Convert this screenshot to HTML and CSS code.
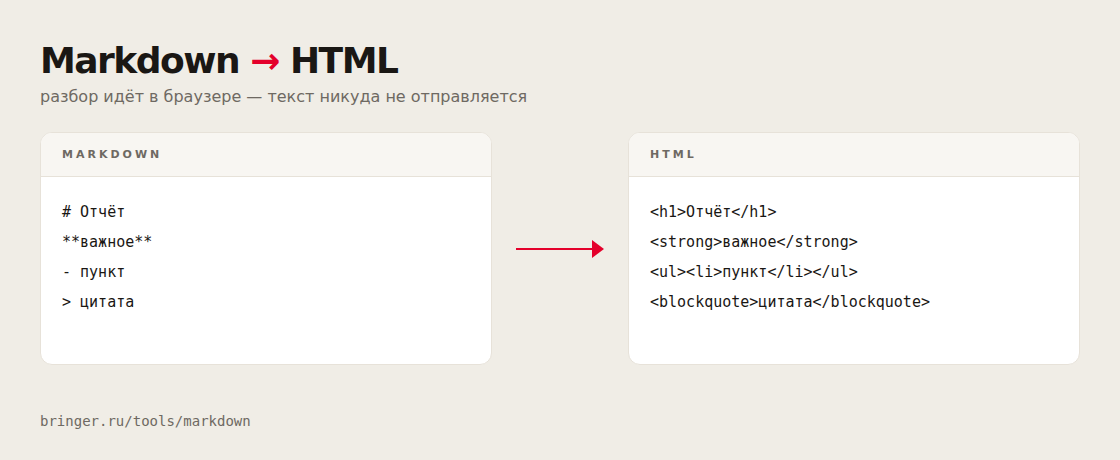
FILE: index.html
```html
<!DOCTYPE html>
<html lang="ru">
<head>
<meta charset="utf-8">
<title>Markdown → HTML</title>
<link rel="stylesheet" href="styles.css">
</head>
<body>
<main class="page">
  <h1 class="title">Markdown <span class="title-arrow">→</span> HTML</h1>
  <p class="subtitle">разбор идёт в браузере — текст никуда не отправляется</p>
  <section class="compare">
    <div class="card">
      <div class="card-head">MARKDOWN</div>
      <div class="card-body">
        <div class="code-line"># Отчёт</div>
        <div class="code-line">**важное**</div>
        <div class="code-line">- пункт</div>
        <div class="code-line">&gt; цитата</div>
      </div>
    </div>
    <div class="flow">
      <svg class="flow-arrow" width="90" height="20" viewBox="0 0 90 20" aria-hidden="true">
        <rect x="0" y="9" width="78" height="2" fill="#e4002b"/>
        <polygon points="76,1 88,10 76,19" fill="#e4002b"/>
      </svg>
    </div>
    <div class="card">
      <div class="card-head">HTML</div>
      <div class="card-body">
        <div class="code-line">&lt;h1&gt;Отчёт&lt;/h1&gt;</div>
        <div class="code-line">&lt;strong&gt;важное&lt;/strong&gt;</div>
        <div class="code-line">&lt;ul&gt;&lt;li&gt;пункт&lt;/li&gt;&lt;/ul&gt;</div>
        <div class="code-line">&lt;blockquote&gt;цитата&lt;/blockquote&gt;</div>
      </div>
    </div>
  </section>
  <footer class="footer">bringer.ru/tools/markdown</footer>
</main>
</body>
</html>
```

FILE: styles.css
```css
html, body {
  margin: 0;
  padding: 0;
}
body {
  background: #f0ede6;
  font-family: "DejaVu Sans", "Liberation Sans", sans-serif;
  color: #1a1714;
}
.page {
  padding: 39px 40px 0 40px;
}
.title {
  margin: 0;
  font-size: 36px;
  line-height: 44px;
  font-weight: 700;
  letter-spacing: -1.5px;
  color: #1a1714;
}
.title-arrow {
  color: #e4002b;
}
.subtitle {
  margin: 3px 0 0 0;
  font-size: 16px;
  line-height: 22px;
  color: #6e6962;
}
.compare {
  margin-top: 24px;
  display: grid;
  grid-template-columns: 452px 1fr 452px;
  align-items: stretch;
}
.card {
  background: #ffffff;
  border: 1px solid #e7e2d9;
  border-radius: 12px;
  overflow: hidden;
  height: 233px;
  box-sizing: border-box;
}
.card-head {
  background: #f8f6f2;
  border-bottom: 1px solid #e7e2d9;
  height: 44px;
  box-sizing: border-box;
  padding: 0 21px;
  display: flex;
  align-items: center;
  font-size: 11px;
  font-weight: 700;
  letter-spacing: 3px;
  color: #6e6962;
}
.card-body {
  padding: 20px 21px;
  font-family: "DejaVu Sans Mono", "Liberation Mono", monospace;
  font-size: 15px;
  line-height: 30px;
  color: #1a1714;
}
.flow {
  display: flex;
  align-items: center;
  justify-content: center;
}
.flow-arrow {
  display: block;
  margin-left: 2px;
}
.footer {
  margin-top: 46px;
  font-family: "DejaVu Sans Mono", "Liberation Mono", monospace;
  font-size: 14px;
  line-height: 20px;
  color: #6e6962;
}
```
